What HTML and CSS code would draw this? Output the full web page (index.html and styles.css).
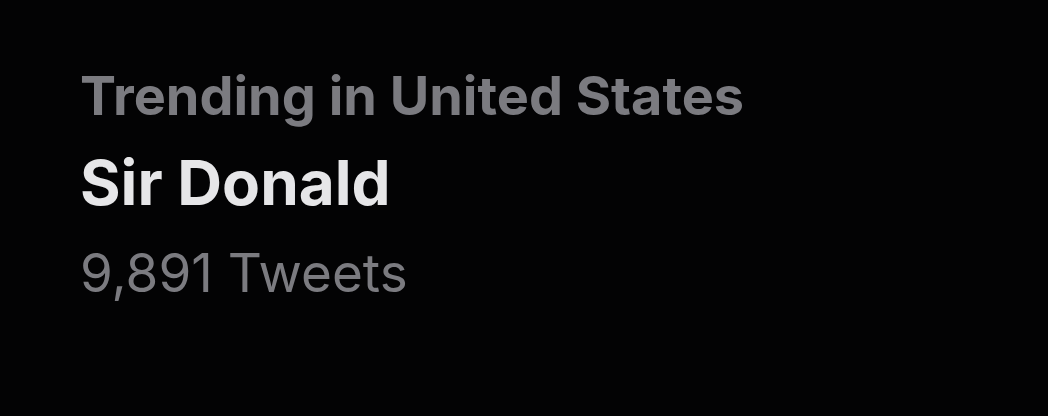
FILE: index.html
```html
<!DOCTYPE html>
<html>
<head>
<meta charset="utf-8">
<link rel="stylesheet" href="styles.css">
</head>
<body>
<div class="trend">
  <div class="context">Trending in United States</div>
  <div class="title">Sir Donald</div>
  <div class="count">9,891 Tweets</div>
</div>
</body>
</html>
```
FILE: styles.css
```css
html, body {
  margin: 0;
  padding: 0;
  background: #030304;
  width: 1048px;
  height: 416px;
  overflow: hidden;
}
.trend {
  padding: 64px 0 0 80px;
  display: flex;
  flex-direction: column;
  font-family: Inter, "Liberation Sans", sans-serif;
}
.context {
  color: #7b7b80;
  font-size: 54px;
  font-weight: 700;
  line-height: 64px;
}
.title {
  margin-top: 10px;
  color: #e6e6e8;
  font-size: 62px;
  font-weight: 700;
  line-height: 90px;
}
.count {
  margin-top: 3px;
  color: #7b7b80;
  font-size: 53px;
  font-weight: 400;
  line-height: 84px;
}
```
